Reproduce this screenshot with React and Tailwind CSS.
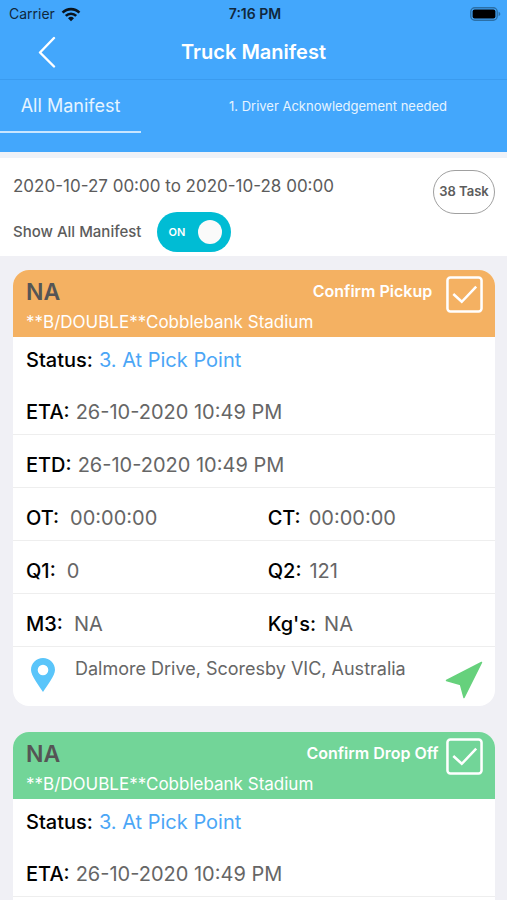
import React, { useState } from 'react';

const TASKS = [
  {
    id: 1,
    action: 'Confirm Pickup',
    headerClass: 'bg-[#f4b162]',
    name: 'NA',
    site: '**B/DOUBLE**Cobblebank Stadium',
    status: '3. At Pick Point',
    times: [
      ['ETA', '26-10-2020 10:49 PM'],
      ['ETD', '26-10-2020 10:49 PM'],
    ],
    details: [
      [['OT', '00:00:00'], ['CT', '00:00:00']],
      [['Q1', '0'], ['Q2', '121']],
      [['M3', 'NA'], ["Kg's", 'NA']],
    ],
    address: 'Dalmore Drive, Scoresby VIC, Australia',
  },
  {
    id: 2,
    action: 'Confirm Drop Off',
    headerClass: 'bg-[#72d598]',
    name: 'NA',
    site: '**B/DOUBLE**Cobblebank Stadium',
    status: '3. At Pick Point',
    times: [['ETA', '26-10-2020 10:49 PM']],
    details: [],
  },
];

const StatusBar = () => (
  <div className="grid h-7 grid-cols-3 items-center pl-[9px] pr-1.5 text-sm text-[#10283c]">
    <div className="flex items-center gap-1.5">
      <span>Carrier</span>
      <svg viewBox="0 0 20 15" className="h-[15px] w-5" fill="none" stroke="#0a141c" strokeWidth="2.6">
        <path d="M1.6 5.6a11.8 11.8 0 0 1 16.8 0" />
        <path d="M4.8 8.9a7.4 7.4 0 0 1 10.4 0" />
        <path d="M10 14.2 7 11.2a4.3 4.3 0 0 1 6 0z" fill="#0a141c" stroke="none" />
      </svg>
    </div>
    <span className="text-center font-semibold">7:16 PM</span>
    <svg viewBox="0 0 31 14" className="h-3.5 w-[31px] justify-self-end">
      <rect x="0.8" y="0.8" width="26.4" height="12.4" rx="4" fill="none" stroke="#2b6fa6" strokeWidth="1.4" />
      <rect x="2.6" y="2.6" width="22.8" height="8.8" rx="2" fill="#000" />
      <path d="M28.6 4.8v4.4c1-.4 1.7-1.2 1.7-2.2s-.7-1.8-1.7-2.2z" fill="#2b6fa6" />
    </svg>
  </div>
);

const Header = () => (
  <header className="bg-[#43a7fc]">
    <StatusBar />
    <div className="grid h-[52px] grid-cols-[80px_1fr_80px] items-center border-b border-[#3a9bef] pb-1">
      <button type="button" aria-label="Back" className="flex h-full cursor-pointer items-center pl-9">
        <svg viewBox="0 0 20 32" className="h-8 w-5" fill="none" stroke="#fff" strokeWidth="2.4" strokeLinecap="round" strokeLinejoin="round">
          <path d="M18 2 4 16.5 18 30.5" />
        </svg>
      </button>
      <h1 className="text-center text-xl font-semibold text-white">Truck Manifest</h1>
    </div>
    <nav className="flex h-[72px] items-start text-[#e6f4ff]">
      <a href="#all" className="flex h-[53px] w-[141px] items-center justify-center border-b-2 border-[#c9e6ff] text-lg">
        All Manifest
      </a>
      <a href="#acknowledgement" className="flex h-[53px] flex-1 items-center justify-center pl-7 text-[13px]">
        1. Driver Acknowledgement needed
      </a>
    </nav>
  </header>
);

const Filters = () => {
  const [showAll, setShowAll] = useState(true);

  return (
    <section className="flex items-start justify-between border-t-6 border-[#eff2f8] bg-white pl-[13px] pr-3 text-[#5c5c5c]">
      <div className="pb-1 pt-4">
        <p className="text-[17px] leading-6">2020-10-27 00:00 to 2020-10-28 00:00</p>
        <label className="mt-[14px] flex cursor-pointer items-center gap-4">
          <span className="text-[15px] font-medium">Show All Manifest</span>
          <input
            type="checkbox"
            role="switch"
            checked={showAll}
            onChange={(e) => setShowAll(e.target.checked)}
            className="peer sr-only"
          />
          <span className="flex h-10 w-[74px] items-center justify-between rounded-full bg-[#9ca3af] pl-[11px] pr-[9px] peer-checked:bg-[#00bcd4]">
            <span className="text-[11px] font-semibold text-white">{showAll ? 'ON' : 'OFF'}</span>
            <span className="h-6 w-6 rounded-full bg-[#fafafa]" />
          </span>
        </label>
      </div>
      <button type="button" className="mt-3 h-11 w-[62px] cursor-pointer rounded-full border border-[#a0a0a0] text-[13px] font-semibold whitespace-nowrap">
        38 Task
      </button>
    </section>
  );
};

const Field = ({ label, value, className = '', valueClass = 'pl-1.5 text-[#666]' }) => (
  <div className={`flex items-baseline leading-6 ${className}`}>
    <dt className="font-medium text-black">{label}:</dt>
    <dd className={valueClass}>{value}</dd>
  </div>
);

const Row = ({ children }) => (
  <dl className="flex h-[53px] items-end border-b border-[#eeeeee] px-[13px] pb-2.5 text-xl">{children}</dl>
);

const TaskCard = ({ task }) => {
  const [confirmed, setConfirmed] = useState(true);

  return (
    <article className="overflow-hidden rounded-t-2xl bg-white not-last:rounded-b-2xl last:flex-1">
      {/* Coloured header */}
      <div className={`flex h-[67px] justify-between pl-[13px] pr-3 text-white ${task.headerClass}`}>
        <div className="pt-2">
          <h2 className="text-[23px] leading-7 font-semibold text-[#555]">{task.name}</h2>
          <p className="mt-1 text-[17px] leading-6 whitespace-nowrap">{task.site}</p>
        </div>
        <label className="-ml-16 flex cursor-pointer items-start gap-[7px] pt-1.5 font-semibold">
          <span className="w-[133px] pt-[3px] text-center whitespace-nowrap">{task.action}</span>
          <input
            type="checkbox"
            checked={confirmed}
            onChange={(e) => setConfirmed(e.target.checked)}
            className="peer sr-only"
          />
          <svg viewBox="0 0 38 38" className="h-[37px] w-[37px] [&>path]:opacity-0 peer-checked:[&>path]:opacity-100" fill="none" stroke="currentColor" strokeWidth="2.6">
            <rect x="1.5" y="1.5" width="35" height="35" rx="3" />
            <path d="M7.5 18.5 16.2 26.5 31 11" />
          </svg>
        </label>
      </div>

      {/* Status and times */}
      <dl className="flex h-[45px] items-center px-[13px] text-xl">
        <Field label="Status" value={task.status} valueClass="pl-1.5 text-[#4ba6f6]" />
      </dl>
      {task.times.map(([label, value]) => (
        <Row key={label}>
          <Field label={label} value={value} />
        </Row>
      ))}
      {task.details.map(([left, right]) => (
        <Row key={left[0]}>
          <Field label={left[0]} value={left[1]} className="w-[53%]" valueClass="pl-[11px] text-[#666]" />
          <Field label={right[0]} value={right[1]} valueClass="pl-2 text-[#666]" />
        </Row>
      ))}

      {/* Address */}
      {task.address && (
        <div className="flex h-[59px] items-start pl-[18px] pr-3">
          <svg viewBox="0 0 24 34" className="mt-[11px] h-[34px] w-6 shrink-0" fill="#5ac5fa">
            <path fillRule="evenodd" d="M12 0C5.3 0 0 5.3 0 12c0 5.5 8 16 12 22 4-6 12-16.5 12-22C24 5.3 18.7 0 12 0zm0 6.700a5.300 5.300 0 1 1 0 10.600 5.300 5.300 0 0 1 0-10.600z" />
          </svg>
          <address className="flex-1 pl-5 pt-2.5 text-lg leading-6 text-[#666] not-italic">{task.address}</address>
          <button type="button" aria-label="Navigate" className="mt-3.5 shrink-0 cursor-pointer">
            <svg viewBox="0 0 38 38" className="h-[38px] w-[38px]" fill="#66d17c" stroke="#66d17c" strokeWidth="1.5" strokeLinejoin="round">
              <path d="M36.5 1.5 1.5 19.5l14 4L19 36.5z" />
            </svg>
          </button>
        </div>
      )}
    </article>
  );
};

export default function App() {
  return (
    <div className="flex min-h-screen flex-col bg-[#f0f0f5] font-[Inter,sans-serif]">
      <Header />
      <Filters />
      <main className="flex flex-1 flex-col gap-[26px] pt-[14px] pl-[13px] pr-3">
        {TASKS.map((task) => (
          <TaskCard key={task.id} task={task} />
        ))}
      </main>
    </div>
  );
}
